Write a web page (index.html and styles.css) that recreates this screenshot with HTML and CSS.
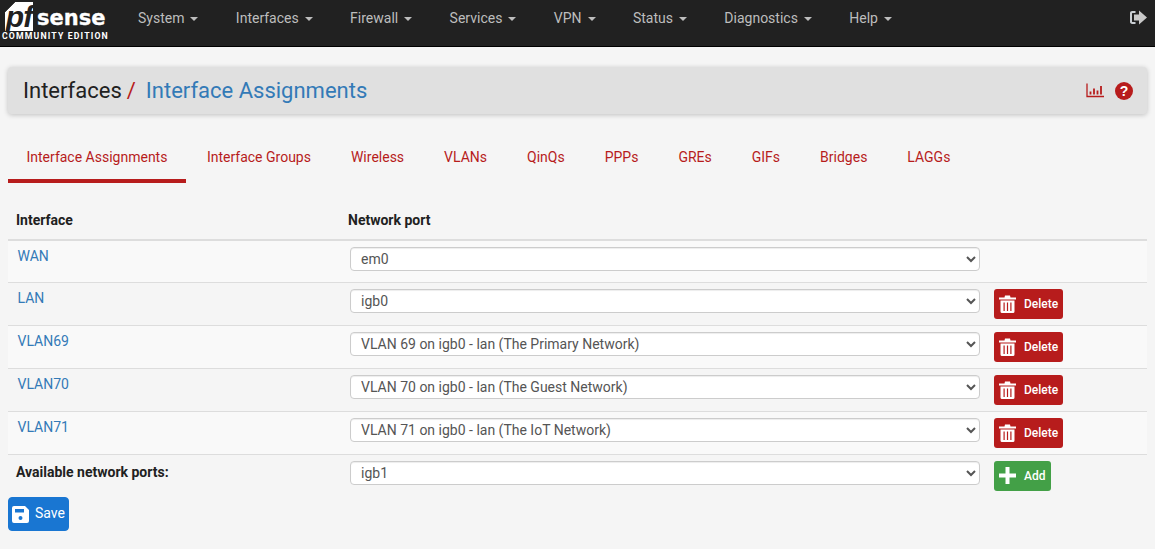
FILE: index.html
```html
<!DOCTYPE html>
<html lang="en">
<head>
<meta charset="utf-8">
<title>Interfaces / Interface Assignments</title>
<link rel="stylesheet" href="styles.css">
</head>
<body>
<header class="navbar">
  <a class="brand" href="#">
    <span class="brand-top"><span class="brand-pf">pf</span><span class="brand-sense">sense</span></span>
    <span class="brand-edition">COMMUNITY EDITION</span>
  </a>
  <nav class="menu">
    <a href="#">System<i class="caret"></i></a>
    <a href="#">Interfaces<i class="caret"></i></a>
    <a href="#">Firewall<i class="caret"></i></a>
    <a href="#">Services<i class="caret"></i></a>
    <a href="#">VPN<i class="caret"></i></a>
    <a href="#">Status<i class="caret"></i></a>
    <a href="#">Diagnostics<i class="caret"></i></a>
    <a href="#">Help<i class="caret"></i></a>
  </nav>
  <a class="logout" href="#" aria-label="Logout">
    <svg width="18" height="15" viewBox="0 0 18 15"><path d="M6.500 1H3.200C1.900 1 1 1.900 1 3.200v8.600C1 13.100 1.900 14 3.200 14h3.300v-2H3.600c-.4 0-.6-.2-.6-.6V3.600c0-.4.200-.6.600-.6h2.900z" fill="#c9ced2"/><path d="M10 .500 18 7.500l-8 7V10.500H5v-6h5z" fill="#c9c9c9"/></svg>
  </a>
</header>

<main class="page">
  <div class="crumbs">
    <h1 class="crumb-title">Interfaces<span class="crumb-sep">/</span><a href="#">Interface Assignments</a></h1>
    <div class="crumb-icons">
      <svg class="icon-chart" width="18" height="15" viewBox="0 0 18 15"><path d="M1 0.500V13.500H18" fill="none" stroke="#b71c1c" stroke-width="1.300"/><path d="M4.500 8.500v3M8 5.500v6M11.500 7.500v4M15 3v8.500" fill="none" stroke="#b71c1c" stroke-width="1.800"/></svg>
      <span class="icon-help">?</span>
    </div>
  </div>

  <nav class="tabs">
    <a class="tab active" href="#">Interface Assignments</a>
    <a class="tab" href="#">Interface Groups</a>
    <a class="tab" href="#">Wireless</a>
    <a class="tab" href="#">VLANs</a>
    <a class="tab" href="#">QinQs</a>
    <a class="tab" href="#">PPPs</a>
    <a class="tab" href="#">GREs</a>
    <a class="tab" href="#">GIFs</a>
    <a class="tab" href="#">Bridges</a>
    <a class="tab" href="#">LAGGs</a>
  </nav>

  <table class="assign">
    <thead>
      <tr><th class="col-name">Interface</th><th class="col-port">Network port</th><th></th></tr>
    </thead>
    <tbody>
      <tr class="odd first">
        <td class="name"><a href="#">WAN</a></td>
        <td class="port"><select><option>em0</option></select></td>
        <td></td>
      </tr>
      <tr>
        <td class="name"><a href="#">LAN</a></td>
        <td class="port"><select><option>igb0</option></select></td>
        <td class="act"><button class="btn btn-del" type="button"><svg class="trash" width="17" height="18" viewBox="0 0 17 18"><path fill-rule="evenodd" d="M0 2.500h5.500L6 .600h5l.5 1.900H17v2H0zM1.500 5.500h14V16.500a1.500 1.500 0 0 1-1.500 1.500H3a1.500 1.500 0 0 1-1.500-1.500zM4.500 7.500v8.500h1.200V7.500zM7.900 7.500v8.500h1.200V7.500zM11.300 7.500v8.500h1.200V7.500z" fill="#fff"/></svg>Delete</button></td>
      </tr>
      <tr class="odd">
        <td class="name"><a href="#">VLAN69</a></td>
        <td class="port"><select><option>VLAN 69 on igb0 - lan (The Primary Network)</option></select></td>
        <td class="act"><button class="btn btn-del" type="button"><svg class="trash" width="17" height="18" viewBox="0 0 17 18"><path fill-rule="evenodd" d="M0 2.500h5.500L6 .600h5l.5 1.900H17v2H0zM1.500 5.500h14V16.500a1.500 1.500 0 0 1-1.500 1.500H3a1.500 1.500 0 0 1-1.500-1.500zM4.500 7.500v8.500h1.200V7.500zM7.900 7.500v8.500h1.200V7.500zM11.300 7.500v8.500h1.200V7.500z" fill="#fff"/></svg>Delete</button></td>
      </tr>
      <tr>
        <td class="name"><a href="#">VLAN70</a></td>
        <td class="port"><select><option>VLAN 70 on igb0 - lan (The Guest Network)</option></select></td>
        <td class="act"><button class="btn btn-del" type="button"><svg class="trash" width="17" height="18" viewBox="0 0 17 18"><path fill-rule="evenodd" d="M0 2.500h5.500L6 .600h5l.5 1.900H17v2H0zM1.500 5.500h14V16.500a1.500 1.500 0 0 1-1.500 1.500H3a1.500 1.500 0 0 1-1.500-1.500zM4.500 7.500v8.500h1.200V7.500zM7.900 7.500v8.500h1.200V7.500zM11.300 7.500v8.500h1.200V7.500z" fill="#fff"/></svg>Delete</button></td>
      </tr>
      <tr class="odd">
        <td class="name"><a href="#">VLAN71</a></td>
        <td class="port"><select><option>VLAN 71 on igb0 - lan (The IoT Network)</option></select></td>
        <td class="act"><button class="btn btn-del" type="button"><svg class="trash" width="17" height="18" viewBox="0 0 17 18"><path fill-rule="evenodd" d="M0 2.500h5.500L6 .600h5l.5 1.900H17v2H0zM1.500 5.500h14V16.500a1.500 1.500 0 0 1-1.500 1.500H3a1.500 1.500 0 0 1-1.500-1.500zM4.500 7.500v8.500h1.200V7.500zM7.900 7.500v8.500h1.200V7.500zM11.300 7.500v8.500h1.200V7.500z" fill="#fff"/></svg>Delete</button></td>
      </tr>
      <tr class="last">
        <td class="name avail">Available network ports:</td>
        <td class="port"><select><option>igb1</option></select></td>
        <td class="act"><button class="btn btn-add" type="button"><svg class="plus" width="17" height="17" viewBox="0 0 17 17"><path d="M6.500 0h4v6.500H17v4h-6.500V17h-4v-6.500H0v-4h6.500z" fill="#fff"/></svg>Add</button></td>
      </tr>
    </tbody>
  </table>

  <button class="btn-save" type="button"><svg width="17" height="17" viewBox="0 0 17 17"><path fill-rule="evenodd" d="M2 0h11l4 4v11a2 2 0 0 1-2 2H2a2 2 0 0 1-2-2V2a2 2 0 0 1 2-2zM3 3v3.500h9V3zM8.500 10a2 2 0 1 0 0 4 2 2 0 0 0 0-4z" fill="#fff"/></svg><span class="save-label">Save</span></button>
</main>
<footer class="foot"></footer>
</body>
</html>
```
FILE: styles.css
```css
* { box-sizing: border-box; }
html, body { margin: 0; height: 100%; }
body {
  background: #f5f5f5;
  font-family: Roboto, "Liberation Sans", sans-serif;
  font-size: 14px;
  color: #212121;
  overflow: hidden;
}
a { text-decoration: none; }

.navbar {
  height: 47px;
  background: #212121;
  border-bottom: 1px solid #000;
  display: flex;
  align-items: flex-start;
  color: #bdbdbd;
}
.brand {
  width: 111px;
  flex: none;
  display: flex;
  flex-direction: column;
  color: #fff;
  padding-left: 2px;
}
.brand-top { display: flex; align-items: center; height: 32px; padding-left: 3px; }
.brand-pf {
  width: 28px;
  height: 29px;
  background: linear-gradient(135deg, transparent 7px, #fff 7.500px);
  color: #212121;
  font: italic 700 30px/29px "Liberation Sans", sans-serif;
  text-align: center;
  letter-spacing: -1px;
}
.brand-sense {
  font: 700 21px/28px "DejaVu Sans", sans-serif;
  -webkit-text-stroke: .3px #fff;
  margin-left: 4px;
  margin-top: 4px;
}
.brand-edition {
  font: 700 8.700px/9px Roboto, sans-serif;
  letter-spacing: 1.16px;
  white-space: nowrap;
}

.menu { display: flex; padding-left: 27px; }
.menu a {
  color: #bdbdbd;
  font-size: 14px;
  line-height: 37px;
  margin-right: 37.400px;
  white-space: nowrap;
}
.caret {
  display: inline-block;
  margin-left: 6px;
  vertical-align: 2px;
  border-top: 4px solid #bdbdbd;
  border-left: 4px solid transparent;
  border-right: 4px solid transparent;
}
.logout { margin-left: auto; margin-right: 8px; margin-top: 10px; height: 15px; }

.page { padding: 20px 8px 0; }

.crumbs {
  height: 47px;
  background: #e0e0e0;
  border-radius: 4px;
  box-shadow: 0 1px 5px rgba(0, 0, 0, .22);
  display: flex;
  align-items: center;
  justify-content: space-between;
  padding: 0 14px 0 15px;
}
.crumb-title { margin: 0; padding-top: 1px; font-size: 22px; font-weight: 400; line-height: 46px; color: #212121; }
.crumb-title a { color: #337ab7; }
.crumb-sep { color: #b71c1c; margin: 0 10px 0 5px; font-size: 22px; }
.crumb-icons { display: flex; align-items: center; gap: 11px; }
.icon-help {
  width: 18px;
  height: 18px;
  border-radius: 50%;
  background: #b71c1c;
  color: #fff;
  font: 700 14px/18px "Liberation Sans", sans-serif;
  text-align: center;
}

.tabs { display: flex; height: 51px; margin-top: 18px; }
.tab {
  color: #b71c1c;
  font-size: 14px;
  line-height: 50px;
  padding: 0 19px;
  margin-right: 2px;
  white-space: nowrap;
}
.tab.active { border-bottom: 4px solid #b71c1c; padding: 0 18.500px; }

.assign {
  width: 100%;
  margin-top: 17px;
  border-collapse: collapse;
  table-layout: fixed;
}
.col-name { width: 332px; }
.col-port { width: 652px; }
.assign th {
  height: 40px;
  padding: 0 8px;
  text-align: left;
  font-size: 14px;
  font-weight: 700;
  color: #212121;
  border-bottom: 2px solid #ddd;
}
.assign td { height: 43px; padding: 0; border-bottom: 1px solid #ddd; vertical-align: top; }
.assign tr.first td { height: 42px; }
.assign tr.odd td { background: #f9f9f9; }
.assign tr.last td { border-bottom: 0; }
.name { padding: 5px 0 0 9.500px !important; line-height: 20px; }
.name a { color: #337ab7; }
.avail { padding-left: 8px !important; font-weight: 700; padding-top: 7px !important; }
.port { padding: 6px 0 0 10px !important; }
.port select {
  display: block;
  width: 630px;
  height: 24px;
  padding: 0 6px;
  border: 1px solid #ccc;
  border-radius: 4px;
  background-color: #fff;
  color: #555;
  font-family: Roboto, sans-serif;
  font-size: 14px;
  box-shadow: inset 0 1px 1px rgba(0, 0, 0, .075);
}
.act { padding: 6px 0 0 2px !important; }

.btn {
  display: flex;
  align-items: center;
  height: 30px;
  padding: 0 4px;
  border: 1px solid transparent;
  border-radius: 3px;
  color: #fff;
  font-family: Roboto, sans-serif;
  font-size: 12px;
  font-weight: 500;
}
.btn-del { width: 69px; background: #b71c1c; }
.btn-add { width: 57px; background: #43a047; }
.trash, .plus { margin-right: 8px; flex: none; }

.btn-save {
  display: flex;
  align-items: center;
  gap: 6px;
  width: 61px;
  height: 34px;
  padding: 0 3px;
  background: #1976d2;
  border: 1px solid #1976d2;
  border-radius: 4px;
  color: #fff;
  font-family: Roboto, sans-serif;
  font-size: 14px;
  font-weight: 400;
}
.save-label { padding-bottom: 2px; }

.foot {
  height: 0;
  margin-top: 18px;
  box-shadow: 0 -1px 6px rgba(0, 0, 0, .08);
}
```
